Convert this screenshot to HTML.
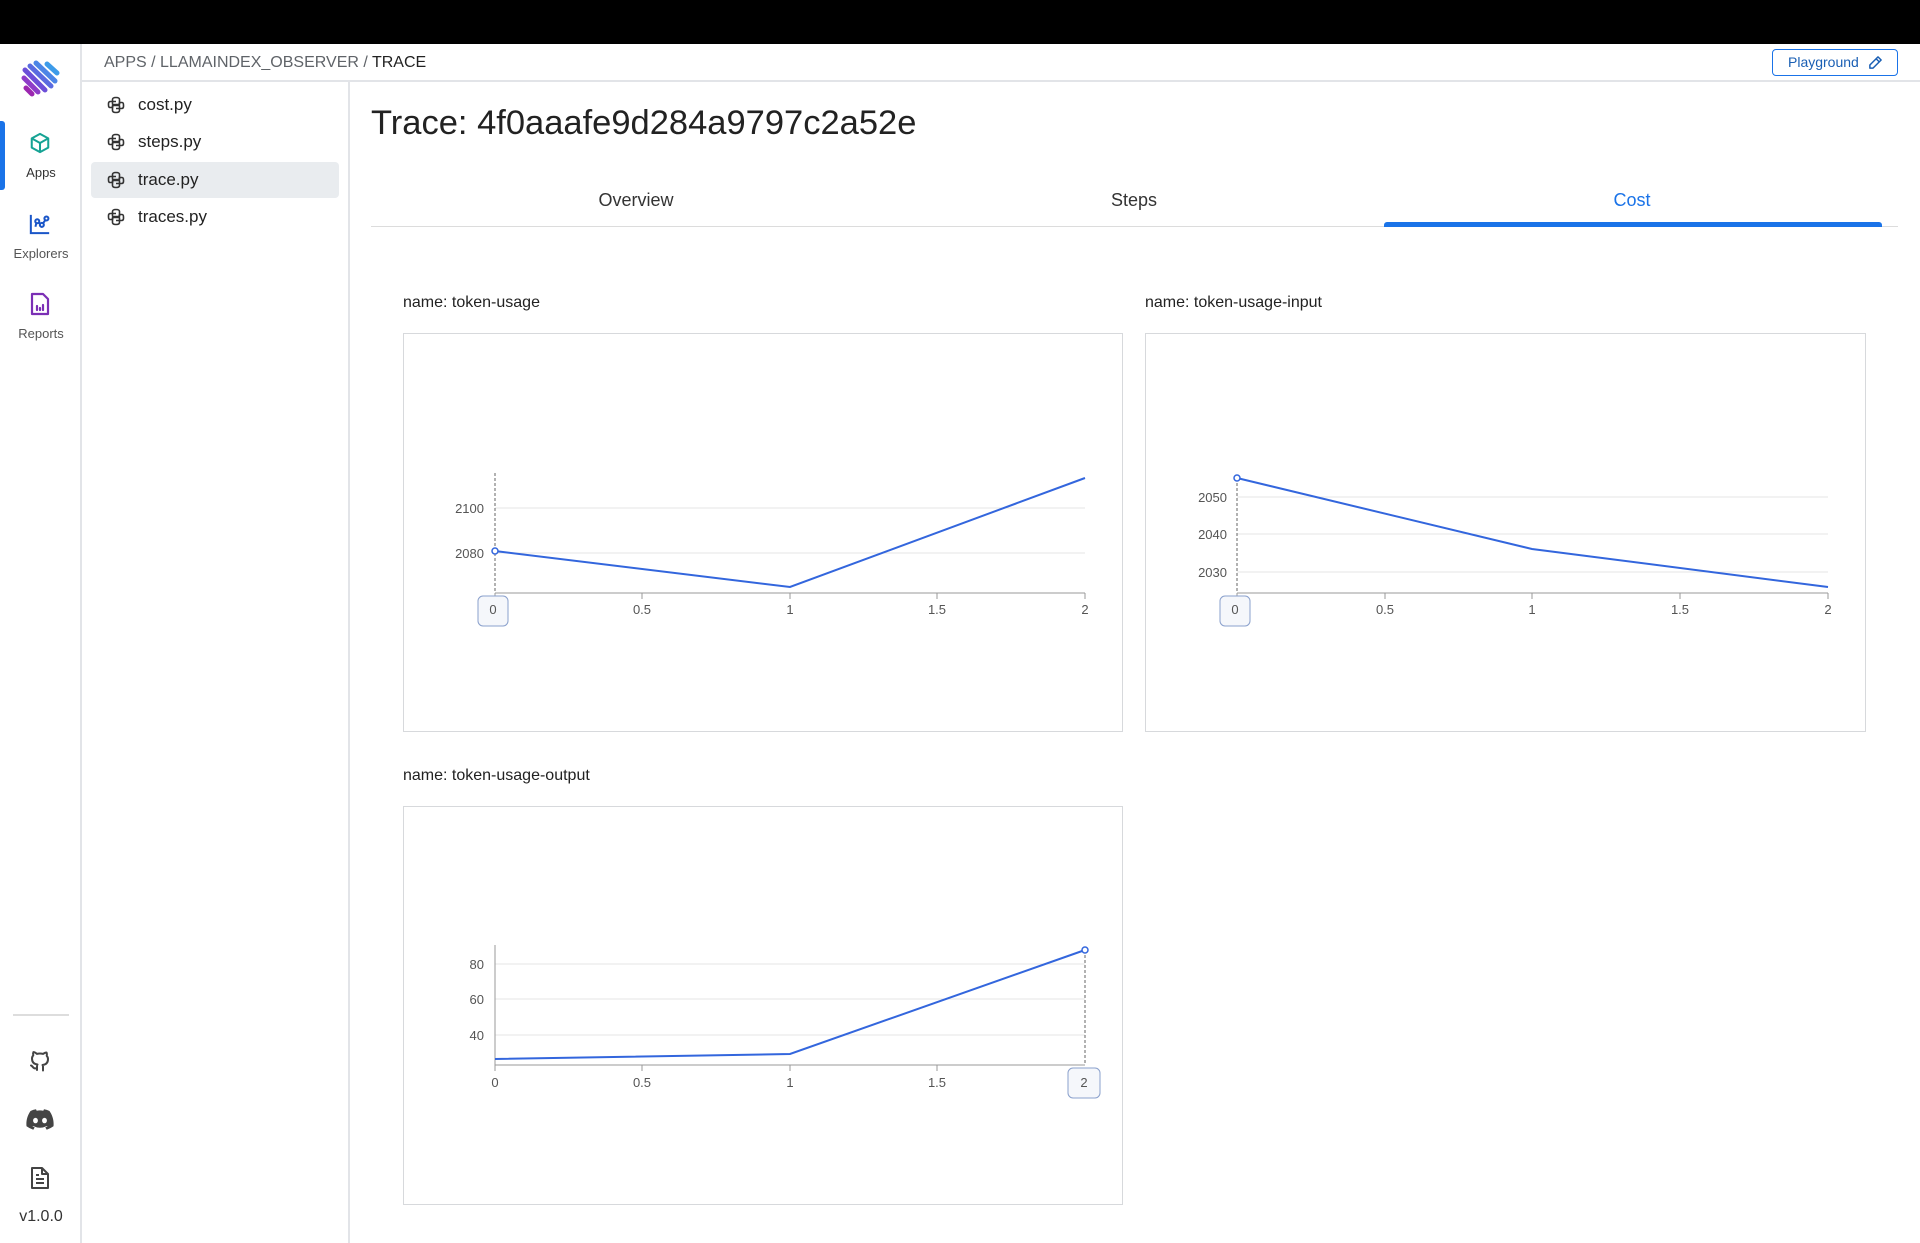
<!DOCTYPE html>
<html><head><meta charset="utf-8"><style>
*{margin:0;padding:0;box-sizing:border-box}
body{width:1920px;height:1243px;overflow:hidden;background:#fff;font-family:"Liberation Sans",sans-serif;position:relative;color:#1a1a1a}
.abs{position:absolute}
.topbar{left:0;top:0;width:1920px;height:44px;background:#000}
.rail{left:0;top:44px;width:82px;height:1199px;border-right:2px solid #e2e4e8;background:#fff}
.hdr{left:82px;top:80px;width:1838px;height:2px;background:#e2e4e8}
.side{left:82px;top:82px;width:268px;height:1161px;border-right:2px solid #e2e4e8}
.crumb{left:104px;top:54px;font-size:16px;color:#5f6368;letter-spacing:0}
.crumb b{font-weight:normal;color:#222}
.pg{left:1772px;top:49px;width:126px;height:27px;border:1.5px solid #1a73e8;border-radius:4px;color:#1a5fb4;font-size:14px;line-height:24px;padding-left:15px}
.item{left:91px;width:248px;height:36px;border-radius:4px;font-size:17px;line-height:36px;padding-left:47px;color:#222}
.item svg{position:absolute;left:16px;top:9px}
.sel{background:#e9ecef}
.title{left:371px;top:104px;font-size:34.5px;color:#222}
.tab{top:190px;font-size:18px;color:#333;width:200px;text-align:center}
.lbl{font-size:16px;color:#222}
.box{border:1.5px solid #d7d9dc}
.rl{font-size:13px;color:#555;width:82px;text-align:center}
</style></head><body>
<div class="abs topbar"></div>
<div class="abs rail"></div>
<div class="abs" style="left:0;top:121px;width:5px;height:69px;background:#1a73e8;border-radius:0 3px 3px 0"></div>
<svg class="abs" style="left:20px;top:56px" width="42" height="42" viewBox="0 0 42 42">
<g stroke-linecap="round" stroke-width="5">
<line x1="6" y1="32" x2="12" y2="38" stroke="#9c27b0"/>
<line x1="4" y1="22" x2="18" y2="36" stroke="#8e3cc8"/>
<line x1="5" y1="14" x2="25" y2="34" stroke="#6c4fd8"/>
<line x1="10" y1="10" x2="31" y2="30" stroke="#5a6be0"/>
<line x1="16" y1="7" x2="35" y2="25" stroke="#4c85e6"/>
<line x1="27" y1="8" x2="37" y2="17" stroke="#3d9be9"/>
</g></svg>
<svg class="abs" style="left:29px;top:132px" width="22" height="22" viewBox="0 0 24 24" fill="none" stroke="#16a394" stroke-width="2.2" stroke-linejoin="round"><path d="M12 2l9 5v10l-9 5-9-5V7z"/><path d="M3 7l9 5 9-5M12 12v10"/></svg>
<div class="abs rl" style="top:165px;color:#333">Apps</div>
<svg class="abs" style="left:29px;top:213px" width="22" height="22" viewBox="0 0 24 24" fill="none" stroke="#1a56c8" stroke-width="2.2"><path d="M2 2v20h20"/><circle cx="9" cy="9" r="2.2"/><circle cx="14" cy="13" r="2.2"/><circle cx="19" cy="6" r="2.2"/><path d="M10.5 10.5l2 1.5M15.5 11l2.5-3.5M7 15l1-4"/></svg>
<div class="abs rl" style="top:246px">Explorers</div>
<svg class="abs" style="left:29px;top:292px" width="22" height="24" viewBox="0 0 22 24" fill="none" stroke="#7b2fb5" stroke-width="2.2" stroke-linejoin="round"><path d="M3 2h11l5 5v15H3z"/><path d="M8 18v-4M11 18v-2M14 18v-5" stroke-linecap="round"/></svg>
<div class="abs rl" style="top:326px">Reports</div>
<div class="abs" style="left:13px;top:1014px;width:56px;height:2px;background:#ddd"></div>
<svg class="abs" style="left:28px;top:1049px" width="24" height="24" viewBox="0 0 24 24" fill="none" stroke="#444" stroke-width="2" stroke-linecap="round" stroke-linejoin="round"><path d="M9 19c-4 1.5-4-2-6-2.5m12 5v-3.5c0-1 .1-1.4-.5-2 2.8-.3 5.5-1.4 5.5-6a4.6 4.6 0 0 0-1.3-3.2 4.2 4.2 0 0 0-.1-3.2s-1.1-.3-3.5 1.3a12 12 0 0 0-6.2 0C6.5 2.8 5.4 3.1 5.4 3.1a4.2 4.2 0 0 0-.1 3.2A4.6 4.6 0 0 0 4 9.5c0 4.6 2.7 5.7 5.5 6-.6.6-.6 1.2-.5 2V21"/></svg>
<svg class="abs" style="left:26px;top:1109px" width="28" height="22" viewBox="0 0 28 22"><path fill="#444" d="M23.5 2A22 22 0 0 0 18 .3l-.7 1.4a20 20 0 0 0-6.6 0L10 .3A22 22 0 0 0 4.5 2C1 7.2 0 12.3.5 17.3A22 22 0 0 0 7.3 20.7l1.4-2.3a14 14 0 0 1-2.2-1l.5-.4a16 16 0 0 0 14 0l.5.4a14 14 0 0 1-2.2 1l1.4 2.3a22 22 0 0 0 6.8-3.4c.6-5.8-1-10.9-4-15.3zM9.5 14.3c-1.3 0-2.4-1.2-2.4-2.7s1-2.7 2.4-2.7 2.4 1.2 2.4 2.7-1 2.7-2.4 2.7zm9 0c-1.3 0-2.4-1.2-2.4-2.7s1-2.7 2.4-2.7 2.4 1.2 2.4 2.7-1 2.7-2.4 2.7z"/></svg>
<svg class="abs" style="left:30px;top:1166px" width="20" height="24" viewBox="0 0 20 24" fill="none" stroke="#444" stroke-width="2" stroke-linejoin="round"><path d="M2 2h10l6 6v14H2z"/><path d="M12 2v6h6M6 13h8M6 17h8M6 9h3"/></svg>
<div class="abs rl" style="top:1208px;font-size:16px;color:#333">v1.0.0</div>

<div class="abs hdr"></div>
<div class="abs crumb">APPS / LLAMAINDEX_OBSERVER / <b>TRACE</b></div>
<div class="abs pg">Playground <svg style="position:absolute;right:14px;top:5px" width="15" height="15" viewBox="0 0 24 24" fill="none" stroke="#1a5fb4" stroke-width="2.4" stroke-linejoin="round"><path d="M16 3l5 5L8 21H3v-5z"/><path d="M13 6l5 5"/></svg></div>

<div class="abs side"></div>
<div class="abs item" style="top:87px"><svg width="18" height="18" viewBox="0 0 18 18" fill="none" stroke="#333" stroke-width="1.6" stroke-linejoin="round"><path d="M5.5 8.5V3.5Q5.5 1.5 9 1.5T12.5 3.5V7Q12.5 8.5 11 8.5H7Q5.5 8.5 5.5 10V11.5H3Q1.5 11.5 1.5 9V7.5Q1.5 5.5 3.5 5.5H9"/><path d="M12.5 9.5V14.5Q12.5 16.5 9 16.5T5.5 14.5V11Q5.5 9.5 7 9.5H11Q12.5 9.5 12.5 8V6.5H15Q16.5 6.5 16.5 9V10.5Q16.5 12.5 14.5 12.5H9"/></svg>cost.py</div>
<div class="abs item" style="top:124px"><svg width="18" height="18" viewBox="0 0 18 18" fill="none" stroke="#333" stroke-width="1.6" stroke-linejoin="round"><path d="M5.5 8.5V3.5Q5.5 1.5 9 1.5T12.5 3.5V7Q12.5 8.5 11 8.5H7Q5.5 8.5 5.5 10V11.5H3Q1.5 11.5 1.5 9V7.5Q1.5 5.5 3.5 5.5H9"/><path d="M12.5 9.5V14.5Q12.5 16.5 9 16.5T5.5 14.5V11Q5.5 9.5 7 9.5H11Q12.5 9.5 12.5 8V6.5H15Q16.5 6.5 16.5 9V10.5Q16.5 12.5 14.5 12.5H9"/></svg>steps.py</div>
<div class="abs item sel" style="top:162px"><svg width="18" height="18" viewBox="0 0 18 18" fill="none" stroke="#333" stroke-width="1.6" stroke-linejoin="round"><path d="M5.5 8.5V3.5Q5.5 1.5 9 1.5T12.5 3.5V7Q12.5 8.5 11 8.5H7Q5.5 8.5 5.5 10V11.5H3Q1.5 11.5 1.5 9V7.5Q1.5 5.5 3.5 5.5H9"/><path d="M12.5 9.5V14.5Q12.5 16.5 9 16.5T5.5 14.5V11Q5.5 9.5 7 9.5H11Q12.5 9.5 12.5 8V6.5H15Q16.5 6.5 16.5 9V10.5Q16.5 12.5 14.5 12.5H9"/></svg>trace.py</div>
<div class="abs item" style="top:199px"><svg width="18" height="18" viewBox="0 0 18 18" fill="none" stroke="#333" stroke-width="1.6" stroke-linejoin="round"><path d="M5.5 8.5V3.5Q5.5 1.5 9 1.5T12.5 3.5V7Q12.5 8.5 11 8.5H7Q5.5 8.5 5.5 10V11.5H3Q1.5 11.5 1.5 9V7.5Q1.5 5.5 3.5 5.5H9"/><path d="M12.5 9.5V14.5Q12.5 16.5 9 16.5T5.5 14.5V11Q5.5 9.5 7 9.5H11Q12.5 9.5 12.5 8V6.5H15Q16.5 6.5 16.5 9V10.5Q16.5 12.5 14.5 12.5H9"/></svg>traces.py</div>

<div class="abs title">Trace: 4f0aaafe9d284a9797c2a52e</div>
<div class="abs" style="left:371px;top:226px;width:1527px;height:1px;background:#dcdcdc"></div>
<div class="abs tab" style="left:536px">Overview</div>
<div class="abs tab" style="left:1034px">Steps</div>
<div class="abs tab" style="left:1532px;color:#1a73e8">Cost</div>
<div class="abs" style="left:1384px;top:222px;width:498px;height:5px;background:#1a73e8;border-radius:3px 3px 0 0"></div>

<div class="abs lbl" style="left:403px;top:294px">name: token-usage</div>
<div class="abs lbl" style="left:1145px;top:294px">name: token-usage-input</div>
<div class="abs lbl" style="left:403px;top:767px">name: token-usage-output</div>
<div class="abs box" style="left:403px;top:333px;width:720px;height:399px"></div>
<div class="abs box" style="left:1145px;top:333px;width:721px;height:399px"></div>
<div class="abs box" style="left:403px;top:806px;width:720px;height:399px"></div>

<svg class="abs" style="left:0;top:0" width="1920" height="1243" font-family="Liberation Sans, sans-serif" font-size="13" fill="#555">
<g stroke="#e6e6e6"><line x1="495" y1="508" x2="1085" y2="508"/><line x1="495" y1="553" x2="1085" y2="553"/></g>
<line x1="495" y1="473" x2="495" y2="593" stroke="#666" stroke-dasharray="3,2"/>
<line x1="495" y1="593" x2="1085" y2="593" stroke="#999"/>
<g stroke="#999"><line x1="495" y1="593" x2="495" y2="599"/><line x1="642" y1="593" x2="642" y2="599"/><line x1="790" y1="593" x2="790" y2="599"/><line x1="937" y1="593" x2="937" y2="599"/><line x1="1085" y1="593" x2="1085" y2="599"/></g>
<g text-anchor="end"><text x="484" y="513">2100</text><text x="484" y="558">2080</text></g>
<rect x="478" y="596" width="30" height="30" rx="5" fill="#f5f7fb" stroke="#8aa0cc"/>
<g text-anchor="middle"><text x="493" y="614">0</text><text x="642" y="614">0.5</text><text x="790" y="614">1</text><text x="937" y="614">1.5</text><text x="1085" y="614">2</text></g>
<polyline points="495,551 790,587 1085,478" fill="none" stroke="#3366dd" stroke-width="2"/>
<circle cx="495" cy="551" r="3" fill="#fff" stroke="#3366dd" stroke-width="1.5"/>
<g stroke="#e6e6e6"><line x1="1237" y1="497" x2="1828" y2="497"/><line x1="1237" y1="534" x2="1828" y2="534"/><line x1="1237" y1="572" x2="1828" y2="572"/></g>
<line x1="1237" y1="478" x2="1237" y2="593" stroke="#666" stroke-dasharray="3,2"/>
<line x1="1237" y1="593" x2="1828" y2="593" stroke="#999"/>
<g stroke="#999"><line x1="1237" y1="593" x2="1237" y2="599"/><line x1="1385" y1="593" x2="1385" y2="599"/><line x1="1532" y1="593" x2="1532" y2="599"/><line x1="1680" y1="593" x2="1680" y2="599"/><line x1="1828" y1="593" x2="1828" y2="599"/></g>
<g text-anchor="end"><text x="1227" y="502">2050</text><text x="1227" y="539">2040</text><text x="1227" y="577">2030</text></g>
<rect x="1220" y="596" width="30" height="30" rx="5" fill="#f5f7fb" stroke="#8aa0cc"/>
<g text-anchor="middle"><text x="1235" y="614">0</text><text x="1385" y="614">0.5</text><text x="1532" y="614">1</text><text x="1680" y="614">1.5</text><text x="1828" y="614">2</text></g>
<polyline points="1237,478 1532,549 1828,587" fill="none" stroke="#3366dd" stroke-width="2"/>
<circle cx="1237" cy="478" r="3" fill="#fff" stroke="#3366dd" stroke-width="1.5"/>
<g stroke="#e6e6e6"><line x1="495" y1="964" x2="1085" y2="964"/><line x1="495" y1="999" x2="1085" y2="999"/><line x1="495" y1="1035" x2="1085" y2="1035"/></g>
<line x1="495" y1="945" x2="495" y2="1065" stroke="#999"/>
<line x1="1085" y1="950" x2="1085" y2="1065" stroke="#666" stroke-dasharray="3,2"/>
<line x1="495" y1="1065" x2="1085" y2="1065" stroke="#999"/>
<g stroke="#999"><line x1="495" y1="1065" x2="495" y2="1071"/><line x1="642" y1="1065" x2="642" y2="1071"/><line x1="790" y1="1065" x2="790" y2="1071"/><line x1="937" y1="1065" x2="937" y2="1071"/></g>
<g text-anchor="end"><text x="484" y="969">80</text><text x="484" y="1004">60</text><text x="484" y="1040">40</text></g>
<rect x="1068" y="1068" width="32" height="30" rx="5" fill="#f5f7fb" stroke="#8aa0cc"/>
<g text-anchor="middle"><text x="495" y="1087">0</text><text x="642" y="1087">0.5</text><text x="790" y="1087">1</text><text x="937" y="1087">1.5</text><text x="1084" y="1087">2</text></g>
<polyline points="495,1059 790,1054 1085,950" fill="none" stroke="#3366dd" stroke-width="2"/>
<circle cx="1085" cy="950" r="3" fill="#fff" stroke="#3366dd" stroke-width="1.5"/>
</svg>
</body></html>
